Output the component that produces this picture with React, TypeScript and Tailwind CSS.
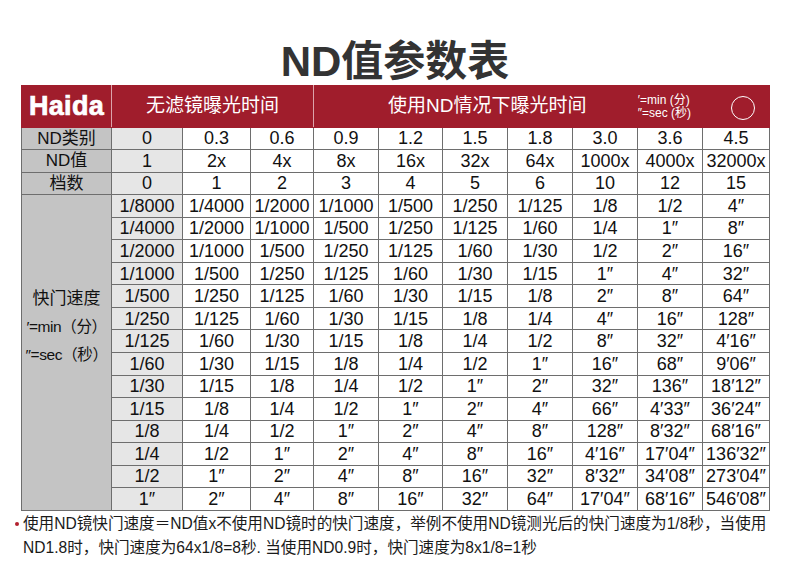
import React from 'react'

const widths = [90, 71, 68, 63, 65, 64, 65, 65, 65, 65, 67]

const topRows: [string, string[]][] = [
  ['ND类别', ['0', '0.3', '0.6', '0.9', '1.2', '1.5', '1.8', '3.0', '3.6', '4.5']],
  ['ND值', ['1', '2x', '4x', '8x', '16x', '32x', '64x', '1000x', '4000x', '32000x']],
  ['档数', ['0', '1', '2', '3', '4', '5', '6', '10', '12', '15']],
]

const speeds: string[][] = [
  ['1/8000', '1/4000', '1/2000', '1/1000', '1/500', '1/250', '1/125', '1/8', '1/2', '4″'],
  ['1/4000', '1/2000', '1/1000', '1/500', '1/250', '1/125', '1/60', '1/4', '1″', '8″'],
  ['1/2000', '1/1000', '1/500', '1/250', '1/125', '1/60', '1/30', '1/2', '2″', '16″'],
  ['1/1000', '1/500', '1/250', '1/125', '1/60', '1/30', '1/15', '1″', '4″', '32″'],
  ['1/500', '1/250', '1/125', '1/60', '1/30', '1/15', '1/8', '2″', '8″', '64″'],
  ['1/250', '1/125', '1/60', '1/30', '1/15', '1/8', '1/4', '4″', '16″', '128″'],
  ['1/125', '1/60', '1/30', '1/15', '1/8', '1/4', '1/2', '8″', '32″', '4′16″'],
  ['1/60', '1/30', '1/15', '1/8', '1/4', '1/2', '1″', '16″', '68″', '9′06″'],
  ['1/30', '1/15', '1/8', '1/4', '1/2', '1″', '2″', '32″', '136″', '18′12″'],
  ['1/15', '1/8', '1/4', '1/2', '1″', '2″', '4″', '66″', '4′33″', '36′24″'],
  ['1/8', '1/4', '1/2', '1″', '2″', '4″', '8″', '128″', '8′32″', '68′16″'],
  ['1/4', '1/2', '1″', '2″', '4″', '8″', '16″', '4′16″', '17′04″', '136′32″'],
  ['1/2', '1″', '2″', '4″', '8″', '16″', '32″', '8′32″', '34′08″', '273′04″'],
  ['1″', '2″', '4″', '8″', '16″', '32″', '64″', '17′04″', '68′16″', '546′08″'],
]

const font = "font-['Liberation_Sans','Noto_Sans_CJK_SC',sans-serif]"
const cell = 'border border-[#6e6e6e] p-0 text-center align-middle leading-none whitespace-nowrap'

function ValueCells({ values }: { values: string[] }) {
  return (
    <>
      {values.map((v, i) => (
        <td key={i} className={`${cell} text-[18px] text-[#111] ${i === 0 ? 'bg-[#e6e6e6]' : 'bg-white'}`}>
          {v}
        </td>
      ))}
    </>
  )
}

export default function App() {
  return (
    <div className={`w-[790px] h-[580px] bg-white overflow-hidden ${font}`}>
      <div className="h-[85px] pt-[41px] text-center text-[42px] leading-[42px] font-bold text-[#333]">
        ND值参数表
      </div>

      <table className="ml-[21px] w-[748px] table-fixed border-collapse">
        <colgroup>
          {widths.map((w, i) => (
            <col key={i} style={{ width: w }} />
          ))}
        </colgroup>
        <tbody>
          <tr className="h-[41px] bg-[#a01d2c] text-white">
            <td className="border border-[#a01d2c] border-r-[#dca3aa] p-0 text-center">
              <span className="text-[27px] font-bold tracking-[0.3px] [-webkit-text-stroke:0.7px_white]">Haida</span>
            </td>
            <td colSpan={3} className="border border-[#a01d2c] border-r-[#dca3aa] p-0 text-center text-[19px]">
              无滤镜曝光时间
            </td>
            <td colSpan={7} className="border border-[#a01d2c] p-0">
              <div className="flex items-center pl-[74px] pr-[14px]">
                <span className="text-[19px]">使用ND情况下曝光时间</span>
                <div className="ml-auto flex flex-col text-[12px] leading-[12.5px] mt-[1px]">
                  <span>′=min (分)</span>
                  <span>″=sec (秒)</span>
                </div>
                <div className="ml-[40px] mt-[4px] w-[24px] h-[24px] rounded-full border-[1.5px] border-white" />
              </div>
            </td>
          </tr>

          {topRows.map(([label, values]) => (
            <tr key={label} className="h-[22.55px]">
              <td className={`${cell} bg-[#c4c4c4] text-[17px] text-[#111]`}>{label}</td>
              <ValueCells values={values} />
            </tr>
          ))}

          {speeds.map((row, r) => (
            <tr key={r} className="h-[22.55px]">
              {r === 0 && (
                <td rowSpan={14} className="border border-[#6e6e6e] bg-[#c4c4c4] p-0 pt-[90px] align-top text-center text-[#111]">
                  <div className="text-[17px] leading-[28px]">快门速度</div>
                  <div className="text-[15.5px] leading-[28px] tracking-[-0.4px]">′=min（分）</div>
                  <div className="text-[15.5px] leading-[28px] tracking-[-0.4px]">″=sec（秒）</div>
                </td>
              )}
              <ValueCells values={row} />
            </tr>
          ))}
        </tbody>
      </table>

      <div className="mt-[1px] flex pl-[15px] text-[15.6px] leading-[24px] text-[#1a1a1a]">
        <span className="mt-[10px] mr-[4px] w-[4px] h-[4px] rounded-full bg-[#b3202e] shrink-0" />
        <div>
          <div className="whitespace-nowrap">
            使用ND镜快门速度＝ND值x不使用ND镜时的快门速度，举例不使用ND镜测光后的快门速度为1/8秒，当使用
          </div>
          <div className="whitespace-nowrap">ND1.8时，快门速度为64x1/8=8秒. 当使用ND0.9时，快门速度为8x1/8=1秒</div>
        </div>
      </div>
    </div>
  )
}
